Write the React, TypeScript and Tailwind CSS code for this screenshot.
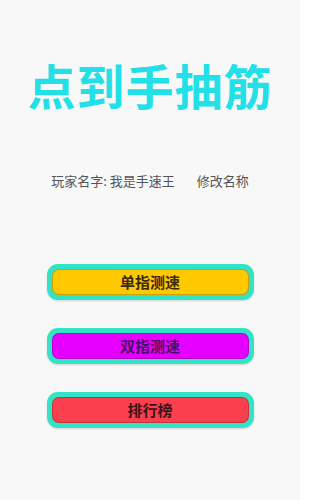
const font = { fontFamily: '"Noto Sans CJK SC", "Noto Sans", sans-serif' };

const buttons = [
  { label: "单指测速", bg: "bg-[#ffc800]", text: "text-[#3a2a10]" },
  { label: "双指测速", bg: "bg-[#e600ff]", text: "text-[#4a1060]" },
  { label: "排行榜", bg: "bg-[#fa3f4f]", text: "text-[#3a1418]" },
];

export default function App() {
  return (
    <div
      className="w-[300px] h-[500px] bg-[#f8f8f8] flex flex-col items-center"
      style={font}
    >
      <h1 className="mt-[60px] text-[48px] leading-none font-bold tracking-[1px] text-[#22dfe8]">
        点到手抽筋
      </h1>
      <div className="mt-[66px] flex items-center text-[13px] leading-none text-[#555]">
        <span>玩家名字: 我是手速王</span>
        <span className="ml-[22px]">修改名称</span>
      </div>
      <div className="mt-[77px] flex flex-col gap-[28px]">
        {buttons.map((b) => (
          <button
            key={b.label}
            className="w-[207px] h-[36px] rounded-[11px] bg-[#33e3c6] p-[5px] shadow-[0_1px_2px_rgba(0,0,0,0.15)]"
          >
            <div
              className={`w-full h-full rounded-[7px] border border-[#00000033] ${b.bg} flex items-center justify-center text-[15px] font-bold ${b.text}`}
            >
              {b.label}
            </div>
          </button>
        ))}
      </div>
    </div>
  );
}
